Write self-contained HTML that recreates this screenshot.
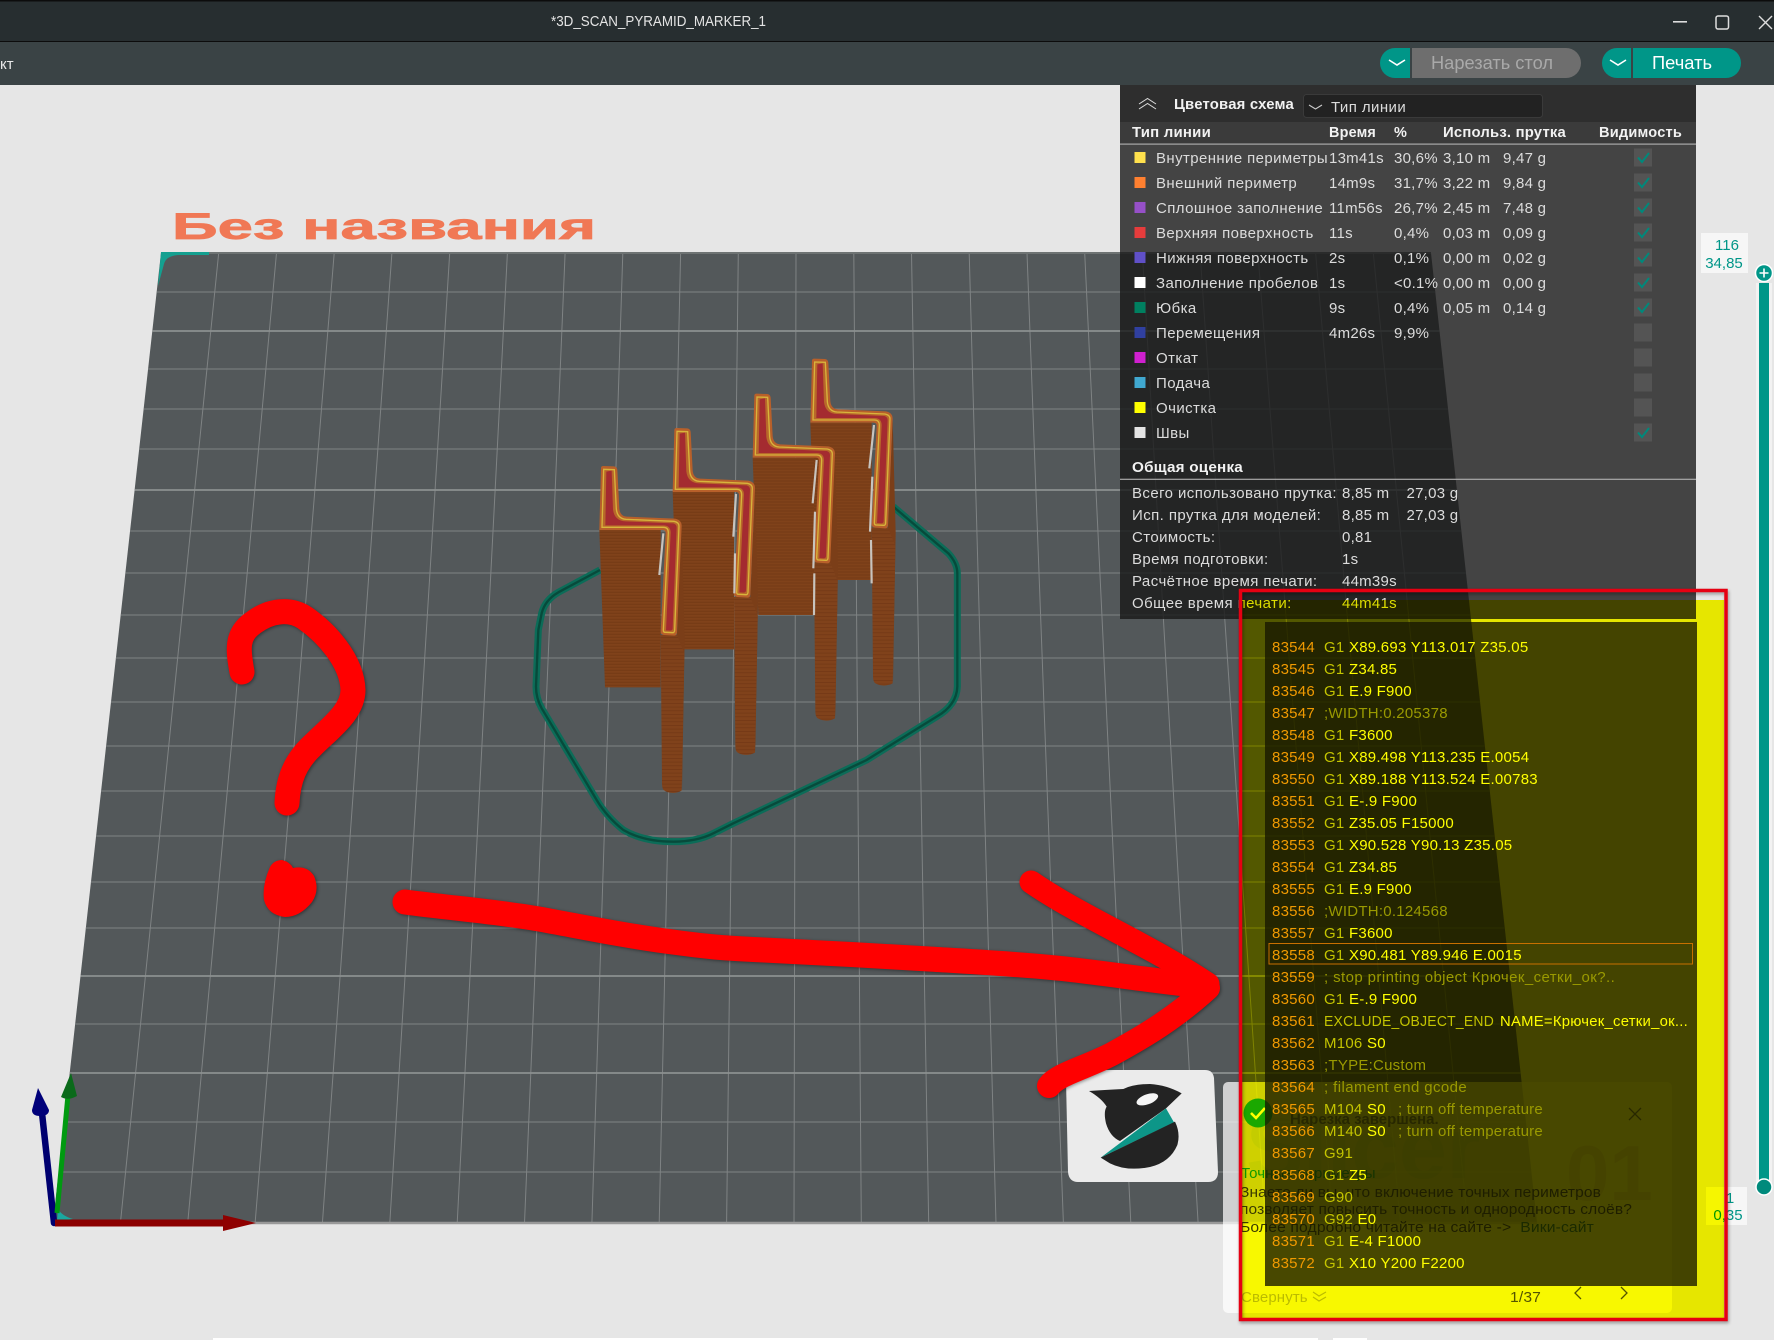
<!DOCTYPE html>
<html lang="ru"><head><meta charset="utf-8"><title>3D_SCAN_PYRAMID_MARKER_1</title>
<style>
html,body{margin:0;padding:0;background:#e6e6e6;width:1774px;height:1340px;overflow:hidden}
svg{display:block;position:absolute;left:0;top:0}
text{font-family:"Liberation Sans","Noto Sans CJK SC",sans-serif;white-space:pre}
.t{font-size:15px;fill:#dcdcdc;letter-spacing:.42px}
.n{font-size:15px;fill:#dcdcdc;letter-spacing:.25px}
.b{font-size:14.5px;font-weight:bold;fill:#f2f2f2;letter-spacing:.2px}
.c{font-size:15px;letter-spacing:.25px;fill:#fff}
.c .l{fill:#f09a40}
.d{fill:#c4c4c4}
.m{fill:#9a9a9a}
.nt{font-size:15px;fill:#3a3a3a;letter-spacing:.12px}
</style></head><body>
<svg width="1774" height="1340" viewBox="0 0 1774 1340" xmlns="http://www.w3.org/2000/svg">
<defs>
<clipPath id="bed"><path d="M161 253L1431 253L1537 1223L53 1223Z"/></clipPath>
<pattern id="st" width="8" height="9" patternUnits="userSpaceOnUse"><rect width="8" height="9" fill="#7d4019"/><rect y="0" width="8" height="2" fill="#743915"/><rect y="5" width="8" height="1" fill="#84461d"/></pattern>
<pattern id="lg" width="8" height="11" patternUnits="userSpaceOnUse"><rect width="8" height="11" fill="#80421b"/><rect y="0" width="8" height="2.500" fill="#743916"/></pattern>
<g id="model">
<path d="M545 560L554 900L546 1350L531 885Z" fill="#7b3e18"/>
<path d="M298 570L482 570L482 1042L315 1042Z" fill="url(#st)"/>
<path d="M482 885L531 885L553 940L545 1352Q520 1365 495 1353Q486 1350 486 1330Z" fill="url(#lg)"/>
<path d="M303 384Q303 378 310 378L342 379Q351 380 352 390L358 505Q360 528 380 530L525 536Q545 540 545 558L531 878Q530 887 522 887L492 885Q482 884 482 875L497 580Q497 570 488 570L298 570Z" fill="#b8602a"/>
<path d="M311 388L343 389L349 507Q352 536 378 538L522 544Q537 547 537 558L524 871Q523 879 517 878L495 877Q490 877 490 870L505 578Q505 562 490 562L306 562Z" fill="#b8682a" stroke="#d8b43c" stroke-width="4"/>
<path d="M319 395L335 392L339 508Q343 543 378 544L520 550Q530 553 530 562L518 866Q517 872 511 872L498 871L512 578Q512 556 490 556L316 556Z" fill="#a42b30"/>
</g>
</defs>

<!-- background -->
<rect width="1774" height="1340" fill="#e6e6e6"/>
<rect x="213" y="1338" width="1105" height="2" fill="#fff"/>
<rect x="1333" y="1338" width="34" height="2" fill="#fff"/>

<!-- title bar and toolbar -->
<rect width="1774" height="42" fill="#272e30"/>
<rect width="1774" height="1.500" fill="#0c0c0c"/>
<rect y="41" width="1774" height="1.500" fill="#0c0c0c"/>
<rect y="42" width="1774" height="43" fill="#3a4345"/>
<text x="551" y="26" font-size="14.500" fill="#e4e4e4" textLength="215" lengthAdjust="spacingAndGlyphs">*3D_SCAN_PYRAMID_MARKER_1</text>
<text x="0" y="69" font-size="15" fill="#e8e8e8">кт</text>
<rect x="1673" y="21" width="14" height="1.600" fill="#ddd"/>
<rect x="1716" y="16" width="12.500" height="13" rx="2" fill="none" stroke="#ddd" stroke-width="1.500"/>
<path d="M1759 16L1772 29M1772 16L1759 29" stroke="#ddd" stroke-width="1.400" fill="none"/>

<!-- buttons -->
<path d="M1395 48H1410V78H1395A15 15 0 0 1 1395 48Z" fill="#009688"/>
<path d="M1412 48H1566A15 15 0 0 1 1566 78H1412Z" fill="#6e6e6e"/>
<path d="M1389 60L1397 65L1405 60" fill="none" stroke="#fff" stroke-width="1.600"/>
<text x="1431" y="69" font-size="18" fill="#a9a9a9" textLength="122" lengthAdjust="spacingAndGlyphs">Нарезать стол</text>
<path d="M1617 48H1631V78H1617A15 15 0 0 1 1617 48Z" fill="#009688"/>
<path d="M1633 48H1726A15 15 0 0 1 1726 78H1633Z" fill="#009688"/>
<path d="M1610 60L1618 65L1626 60" fill="none" stroke="#fff" stroke-width="1.600"/>
<text x="1652" y="69" font-size="18" fill="#fff" textLength="60" lengthAdjust="spacingAndGlyphs">Печать</text>

<!-- name on bed -->
<text x="172" y="239" font-size="37" font-weight="bold" fill="#f07855" stroke="#f07855" stroke-width=".7" textLength="424" lengthAdjust="spacingAndGlyphs">Без названия</text>

<!-- bed -->
<path d="M161 253L1431 253L1537 1223L53 1223Z" fill="#53585a"/>
<g clip-path="url(#bed)">
<g stroke="#7f8384" stroke-width="1" fill="none">
<path d="M218.700 253L120.400 1223M276.500 253L187.700 1223M334.200 253L255.100 1223M391.900 253L322.400 1223M449.700 253L389.800 1223M507.400 253L457.200 1223M565.100 253L524.500 1223M622.800 253L591.900 1223M680.600 253L659.200 1223M738.300 253L726.600 1223M796 253L794 1223M853.800 253L861.300 1223M911.500 253L928.700 1223M969.200 253L996 1223M1027 253L1063.400 1223M1084.700 253L1130.800 1223M1142.400 253L1198.100 1223M1200.100 253L1265.500 1223M1257.900 253L1332.800 1223M1315.600 253L1400.200 1223M1373.300 253L1467.600 1223"/>
<path d="M0 292H1774M0 369H1774M0 409H1774M0 449H1774M0 531H1774M0 573H1774M0 615H1774M0 658H1774M0 702H1774M0 746H1774M0 791H1774M0 836H1774M0 882H1774M0 928H1774M0 1024H1774M0 1122H1774M0 1172H1774"/>
</g>
<path d="M0 331H1774M0 490H1774M0 976H1774M0 1073H1774" stroke="#8c9090" stroke-width="1.700" fill="none"/>
</g>
<path d="M161 253H1431" stroke="#6e7373" stroke-width="2"/>
<path d="M53 1223H1537" stroke="#999" stroke-width="2.500"/>
<path d="M161 252L209 252L209 255L178 255Q166 256 164 264L158 286Z" fill="#14a090"/>
<path d="M58 1209Q62 1216 73 1219L57 1221Z" fill="#1aa8a0"/>

<!-- skirt -->
<g transform="translate(500 340) scale(.33333)" fill="none" stroke-linejoin="round">
<path d="M300 690L175 757Q135 780 125 820L115 870L108 1040Q108 1075 125 1105L290 1380Q320 1430 370 1470Q430 1505 520 1505Q590 1505 640 1480L700 1450L1100 1260L1310 1130Q1370 1095 1372 1040L1372 700Q1372 670 1345 640L1180 500" stroke="#0c6c58" stroke-width="21"/>
<path d="M300 690L175 757Q135 780 125 820L115 870L108 1040Q108 1075 125 1105L290 1380Q320 1430 370 1470Q430 1505 520 1505Q590 1505 640 1480L700 1450L1100 1260L1310 1130Q1370 1095 1372 1040L1372 700Q1372 670 1345 640L1180 500" stroke="#074a3b" stroke-width="7"/>
</g>

<!-- models -->
<g transform="translate(500 340) scale(.33333)">
<use href="#model" transform="translate(633 -322)"/>
<use href="#model" transform="translate(460 -217)"/>
<use href="#model" transform="translate(220 -114)"/>
<use href="#model"/>
<g stroke="#c8c4be" stroke-width="6.500" fill="none">
<path d="M490 580L478 705"/>
<path d="M708 462L700 590M705 640L703 760"/>
<path d="M950 360L938 490M945 515L940 685M943 700L942 825"/>
<path d="M1122 255L1108 385M1117 410L1110 575M1113 600L1115 730"/>
</g>
</g>

<!-- axes -->
<path d="M54 1223L42 1113" stroke="#000070" stroke-width="6.500" stroke-linecap="round"/>
<path d="M38 1088L32 1110Q32 1116 40 1116Q49 1116 49 1110Z" fill="#00007a"/>
<path d="M57 1213L68 1095" stroke="#009a10" stroke-width="5"/>
<path d="M71 1073L61 1097Q68 1101 77 1096Z" fill="#0a6a1a"/>
<rect x="55" y="1219.500" width="168" height="7" fill="#8c0000"/>
<path d="M223 1215L256 1223L223 1231Z" fill="#8f0000"/>

<!-- logo tile -->
<path d="M1076 1070L1205 1070Q1213 1070 1214 1078L1218 1172Q1218 1182 1208 1182L1078 1182Q1069 1182 1068 1172L1066 1080Q1066 1070 1076 1070Z" fill="#ebebeb"/>
<g transform="translate(1060 1065) scale(.33333)">
<path d="M87 78Q130 75 190 72Q220 57 270 57Q320 60 365 85L318 130L180 228Q150 215 138 175Q130 140 140 125Q125 100 87 78Z" fill="#232323"/>
<path d="M318 130L342 172L122 278Z" fill="#0d9688"/>
<path d="M345 170Q362 205 352 240Q330 292 270 306Q200 320 150 295L122 278Z" fill="#232323"/>
<ellipse cx="262" cy="103" rx="34" ry="15" transform="rotate(-20 262 103)" fill="#f5f5f5"/>
</g>

<!-- notification -->
<rect x="1223" y="1082" width="449" height="231" rx="5" fill="#fff" fill-opacity=".72"/>
<text x="1246" y="1178" font-size="86" font-weight="bold" fill="#3aa070" fill-opacity=".07">Slicer</text>
<text x="1566" y="1200" font-size="78" font-weight="bold" fill="#a06000" fill-opacity=".14">01</text>
<circle cx="1258" cy="1113" r="14.500" fill="#1aa83c"/>
<path d="M1251 1113L1256 1118L1265 1108" fill="none" stroke="#fff" stroke-width="2.600"/>
<text x="1290" y="1124" font-size="15" font-weight="bold" fill="#606060">Нарезка завершена.</text>
<path d="M1629 1108L1641 1120M1641 1108L1629 1120" stroke="#666" stroke-width="1.300"/>
<text x="1241" y="1178" class="nt" style="fill:#119a6c">Точные периметры</text>
<text x="1240" y="1197" class="nt" textLength="361" lengthAdjust="spacingAndGlyphs">Знаете ли вы, что включение точных периметров</text>
<text x="1240" y="1214" class="nt" textLength="392" lengthAdjust="spacingAndGlyphs">позволяет повысить точность и однородность слоёв?</text>
<text x="1240" y="1232" class="nt" textLength="354" lengthAdjust="spacingAndGlyphs">Более подробно читайте на сайте -&gt;  <tspan fill="#2a7058">Вики-сайт</tspan></text>
<text x="1241" y="1302" class="nt" style="fill:#bbb">Свернуть</text>
<path d="M1313 1292L1319 1296L1326 1292M1313 1297L1319 1301L1326 1297" fill="none" stroke="#bbb" stroke-width="1.200"/>
<text x="1510" y="1302" class="nt" style="fill:#555" textLength="31" lengthAdjust="spacingAndGlyphs">1/37</text>
<path d="M1581 1287L1575 1293L1581 1299M1621 1287L1627 1293L1621 1299" fill="none" stroke="#555" stroke-width="1.300"/>

<!-- slider -->
<rect x="1756" y="283" width="16" height="904" fill="#f2f2f2"/>
<rect x="1759" y="283" width="10" height="900" fill="#009688"/>
<circle cx="1764" cy="273" r="8.500" fill="#009688" stroke="#fff" stroke-width="1.500"/>
<path d="M1759.500 273H1768.500M1764 268.500V277.500" stroke="#fff" stroke-width="1.600"/>
<circle cx="1764" cy="1187" r="8" fill="#008a7c" stroke="#fff" stroke-width="1.500"/>
<path d="M1701 233H1748V273H1701Z" fill="#f6f6f6"/>
<text x="1727" y="250" font-size="15" fill="#009688" text-anchor="middle">116</text>
<text x="1724" y="268" font-size="15" fill="#009688" text-anchor="middle">34,85</text>
<path d="M1706 1187H1747V1225H1706Z" fill="#f6f6f6"/>
<text x="1730" y="1203" font-size="15" fill="#009688" text-anchor="middle">1</text>
<text x="1728" y="1220" font-size="15" fill="#009688" text-anchor="middle">0,35</text>

<!-- legend panel -->
<rect x="1120" y="85" width="576" height="534" fill="#171717" fill-opacity=".784"/>
<rect x="1120" y="85" width="576" height="37" fill="#2e2e2e"/>
<rect x="1120" y="122" width="576" height="22" fill="#000" fill-opacity=".12"/>
<path d="M1139 104L1147.500 98.500L1156 104M1139 109L1147.500 103.500L1156 109" fill="none" stroke="#ddd" stroke-width="1"/>
<text x="1174" y="109" class="b" textLength="120" lengthAdjust="spacingAndGlyphs">Цветовая схема</text>
<rect x="1303.500" y="94.500" width="239" height="23" rx="3" fill="#222" stroke="#3a3a3a"/>
<path d="M1309 105L1315.500 109L1322 105" fill="none" stroke="#ccc" stroke-width="1.100"/>
<text x="1331" y="112" class="t">Тип линии</text>

<text x="1132" y="137" class="b" textLength="79" lengthAdjust="spacingAndGlyphs">Тип линии</text>
<text x="1329" y="137" class="b" textLength="47" lengthAdjust="spacingAndGlyphs">Время</text>
<text x="1394" y="137" class="b">%</text>
<text x="1443" y="137" class="b" textLength="123" lengthAdjust="spacingAndGlyphs">Использ. прутка</text>
<text x="1599" y="137" class="b" textLength="83" lengthAdjust="spacingAndGlyphs">Видимость</text>
<rect x="1120" y="143.500" width="576" height="1.200" fill="#aaa"/>

<g>
<rect x="1134.500" y="152" width="11" height="11" fill="#ffe14d"/>
<rect x="1134.500" y="177" width="11" height="11" fill="#ff8030"/>
<rect x="1134.500" y="202" width="11" height="11" fill="#9650c8"/>
<rect x="1134.500" y="227" width="11" height="11" fill="#e63c3c"/>
<rect x="1134.500" y="252" width="11" height="11" fill="#6050c8"/>
<rect x="1134.500" y="277" width="11" height="11" fill="#ffffff"/>
<rect x="1134.500" y="302" width="11" height="11" fill="#008060"/>
<rect x="1134.500" y="327" width="11" height="11" fill="#3040a0"/>
<rect x="1134.500" y="352" width="11" height="11" fill="#d020d0"/>
<rect x="1134.500" y="377" width="11" height="11" fill="#40a8d0"/>
<rect x="1134.500" y="402" width="11" height="11" fill="#ffff00"/>
<rect x="1134.500" y="427" width="11" height="11" fill="#e4e4e4"/>
</g>

<text x="1156" y="163" class="t" textLength="172" lengthAdjust="spacingAndGlyphs">Внутренние периметры</text>
<text x="1156" y="188" class="t">Внешний периметр</text>
<text x="1156" y="213" class="t">Сплошное заполнение</text>
<text x="1156" y="238" class="t">Верхняя поверхность</text>
<text x="1156" y="263" class="t">Нижняя поверхность</text>
<text x="1156" y="288" class="t">Заполнение пробелов</text>
<text x="1156" y="313" class="t">Юбка</text>
<text x="1156" y="338" class="t">Перемещения</text>
<text x="1156" y="363" class="t">Откат</text>
<text x="1156" y="388" class="t">Подача</text>
<text x="1156" y="413" class="t">Очистка</text>
<text x="1156" y="438" class="t">Швы</text>

<text class="n" x="1329" y="163">13m41s</text><text class="n" x="1394" y="163">30,6%</text><text class="n" x="1443" y="163">3,10 m</text><text class="n" x="1503" y="163">9,47 g</text>
<text class="n" x="1329" y="188">14m9s</text><text class="n" x="1394" y="188">31,7%</text><text class="n" x="1443" y="188">3,22 m</text><text class="n" x="1503" y="188">9,84 g</text>
<text class="n" x="1329" y="213">11m56s</text><text class="n" x="1394" y="213">26,7%</text><text class="n" x="1443" y="213">2,45 m</text><text class="n" x="1503" y="213">7,48 g</text>
<text class="n" x="1329" y="238">11s</text><text class="n" x="1394" y="238">0,4%</text><text class="n" x="1443" y="238">0,03 m</text><text class="n" x="1503" y="238">0,09 g</text>
<text class="n" x="1329" y="263">2s</text><text class="n" x="1394" y="263">0,1%</text><text class="n" x="1443" y="263">0,00 m</text><text class="n" x="1503" y="263">0,02 g</text>
<text class="n" x="1329" y="288">1s</text><text class="n" x="1394" y="288">&lt;0.1%</text><text class="n" x="1443" y="288">0,00 m</text><text class="n" x="1503" y="288">0,00 g</text>
<text class="n" x="1329" y="313">9s</text><text class="n" x="1394" y="313">0,4%</text><text class="n" x="1443" y="313">0,05 m</text><text class="n" x="1503" y="313">0,14 g</text>
<text class="n" x="1329" y="338">4m26s</text><text class="n" x="1394" y="338">9,9%</text>

<g fill="#545454">
<rect x="1634" y="148.500" width="18" height="18"/><rect x="1634" y="173.500" width="18" height="18"/><rect x="1634" y="198.500" width="18" height="18"/><rect x="1634" y="223.500" width="18" height="18"/><rect x="1634" y="248.500" width="18" height="18"/><rect x="1634" y="273.500" width="18" height="18"/><rect x="1634" y="298.500" width="18" height="18"/><rect x="1634" y="323.500" width="18" height="18"/><rect x="1634" y="348.500" width="18" height="18"/><rect x="1634" y="373.500" width="18" height="18"/><rect x="1634" y="398.500" width="18" height="18"/><rect x="1634" y="423.500" width="18" height="18"/>
</g>
<g fill="none" stroke="#00897b" stroke-width="2">
<path d="M1638 157.500L1642 162L1649 153"/><path d="M1638 182.500L1642 187L1649 178"/><path d="M1638 207.500L1642 212L1649 203"/><path d="M1638 232.500L1642 237L1649 228"/><path d="M1638 257.500L1642 262L1649 253"/><path d="M1638 282.500L1642 287L1649 278"/><path d="M1638 307.500L1642 312L1649 303"/><path d="M1638 432.500L1642 437L1649 428"/>
</g>

<text x="1132" y="472" class="b" textLength="111" lengthAdjust="spacingAndGlyphs">Общая оценка</text>
<rect x="1120" y="478.700" width="576" height="1.200" fill="#aaa"/>
<text class="t" x="1132" y="498" textLength="205" lengthAdjust="spacingAndGlyphs">Всего использовано прутка:</text><text class="n" x="1342" y="498">8,85 m</text><text class="n" x="1406.500" y="498">27,03 g</text>
<text class="t" x="1132" y="520">Исп. прутка для моделей:</text><text class="n" x="1342" y="520">8,85 m</text><text class="n" x="1406.500" y="520">27,03 g</text>
<text class="t" x="1132" y="542">Стоимость:</text><text class="n" x="1342" y="542">0,81</text>
<text class="t" x="1132" y="564">Время подготовки:</text><text class="n" x="1342" y="564">1s</text>
<text class="t" x="1132" y="586">Расчётное время печати:</text><text class="n" x="1342" y="586">44m39s</text>
<text class="t" x="1132" y="608">Общее время печати:</text><text class="n" x="1342" y="608">44m41s</text>

<!-- gcode panel -->
<rect x="1265" y="622" width="432" height="664" fill="#171717" fill-opacity=".784"/>
<rect x="1269" y="943.500" width="423.500" height="20.500" fill="none" stroke="#c87030" stroke-width="1"/>
<g class="c">
<text class="c" x="1272" y="652"><tspan class="l">83544</tspan><tspan x="1324" class="d">G1 </tspan>X89.693 Y113.017 Z35.05</text>
<text class="c" x="1272" y="674"><tspan class="l">83545</tspan><tspan x="1324" class="d">G1 </tspan>Z34.85</text>
<text class="c" x="1272" y="696"><tspan class="l">83546</tspan><tspan x="1324" class="d">G1 </tspan>E.9 F900</text>
<text class="c" x="1272" y="718"><tspan class="l">83547</tspan><tspan x="1324" class="m">;WIDTH:0.205378</tspan></text>
<text class="c" x="1272" y="740"><tspan class="l">83548</tspan><tspan x="1324" class="d">G1 </tspan>F3600</text>
<text class="c" x="1272" y="762"><tspan class="l">83549</tspan><tspan x="1324" class="d">G1 </tspan>X89.498 Y113.235 E.0054</text>
<text class="c" x="1272" y="784"><tspan class="l">83550</tspan><tspan x="1324" class="d">G1 </tspan>X89.188 Y113.524 E.00783</text>
<text class="c" x="1272" y="806"><tspan class="l">83551</tspan><tspan x="1324" class="d">G1 </tspan>E-.9 F900</text>
<text class="c" x="1272" y="828"><tspan class="l">83552</tspan><tspan x="1324" class="d">G1 </tspan>Z35.05 F15000</text>
<text class="c" x="1272" y="850"><tspan class="l">83553</tspan><tspan x="1324" class="d">G1 </tspan>X90.528 Y90.13 Z35.05</text>
<text class="c" x="1272" y="872"><tspan class="l">83554</tspan><tspan x="1324" class="d">G1 </tspan>Z34.85</text>
<text class="c" x="1272" y="894"><tspan class="l">83555</tspan><tspan x="1324" class="d">G1 </tspan>E.9 F900</text>
<text class="c" x="1272" y="916"><tspan class="l">83556</tspan><tspan x="1324" class="m">;WIDTH:0.124568</tspan></text>
<text class="c" x="1272" y="938"><tspan class="l">83557</tspan><tspan x="1324" class="d">G1 </tspan>F3600</text>
<text class="c" x="1272" y="960"><tspan class="l">83558</tspan><tspan x="1324" class="d">G1 </tspan>X90.481 Y89.946 E.0015</text>
<text class="c" x="1272" y="982"><tspan class="l">83559</tspan></text><text class="c m" x="1324" y="982" textLength="291" lengthAdjust="spacing">; stop printing object Крючек_сетки_ок?..</text>
<text class="c" x="1272" y="1004"><tspan class="l">83560</tspan><tspan x="1324" class="d">G1 </tspan>E-.9 F900</text>
<text class="c" x="1272" y="1026"><tspan class="l">83561</tspan></text><text class="c d" x="1324" y="1026" textLength="170" lengthAdjust="spacingAndGlyphs">EXCLUDE_OBJECT_END</text><text class="c" x="1500" y="1026" textLength="188" lengthAdjust="spacingAndGlyphs">NAME=Крючек_сетки_ок...</text>
<text class="c" x="1272" y="1048"><tspan class="l">83562</tspan><tspan x="1324" class="d">M106 </tspan>S0</text>
<text class="c" x="1272" y="1070"><tspan class="l">83563</tspan><tspan x="1324" class="m">;TYPE:Custom</tspan></text>
<text class="c" x="1272" y="1092"><tspan class="l">83564</tspan></text><text class="c m" x="1324" y="1092" textLength="143" lengthAdjust="spacing">; filament end gcode</text>
<text class="c" x="1272" y="1114"><tspan class="l">83565</tspan><tspan x="1324" class="d">M104 </tspan>S0</text><text class="c m" x="1398" y="1114" textLength="145" lengthAdjust="spacing">; turn off temperature</text>
<text class="c" x="1272" y="1136"><tspan class="l">83566</tspan><tspan x="1324" class="d">M140 </tspan>S0</text><text class="c m" x="1398" y="1136" textLength="145" lengthAdjust="spacing">; turn off temperature</text>
<text class="c" x="1272" y="1158"><tspan class="l">83567</tspan><tspan x="1324" class="d">G91</tspan></text>
<text class="c" x="1272" y="1180"><tspan class="l">83568</tspan><tspan x="1324" class="d">G1 </tspan>Z5</text>
<text class="c" x="1272" y="1202"><tspan class="l">83569</tspan><tspan x="1324" class="d">G90</tspan></text>
<text class="c" x="1272" y="1224"><tspan class="l">83570</tspan><tspan x="1324" class="d">G92 </tspan>E0</text>
<text class="c" x="1272" y="1246"><tspan class="l">83571</tspan><tspan x="1324" class="d">G1 </tspan>E-4 F1000</text>
<text class="c" x="1272" y="1268"><tspan class="l">83572</tspan><tspan x="1324" class="d">G1 </tspan>X10 Y200 F2200</text>
</g>

<!-- yellow highlighter -->
<rect x="1240" y="600" width="484" height="719" fill="#ffff00" style="mix-blend-mode:multiply"/>

<!-- red rectangle -->
<rect x="1240.500" y="590.500" width="485.500" height="729" fill="none" stroke="#e60012" stroke-width="3.500" style="filter:drop-shadow(1px 2px 1.500px rgba(0,0,0,.35))"/>

<!-- red hand drawing -->
<g fill="none" stroke="#ff0000" stroke-linecap="round" stroke-linejoin="round" style="filter:drop-shadow(1.500px 1.500px 1.500px rgba(0,0,0,.4))">
<path d="M242 672C238 650 236 635 253 623C270 610 290 608 305 618C325 632 352 660 353 690C353 712 330 728 312 746C295 762 288 780 287 803" stroke-width="25"/>
<path d="M282 860Q290 862 293 868Q307 865 314 876Q320 890 312 902Q300 917 285 917Q268 915 264 900Q262 885 270 867Q274 860 282 860Z" fill="#ff0000" stroke="none"/>
<path d="M405 902C450 908 500 912 539 919S620 935 665 941S720 948 764 950S880 956 929 959S1020 964 1066 969S1160 982 1205 986" stroke-width="25"/>
<path d="M1031 882C1080 916 1150 945 1208 984" stroke-width="23"/>
<path d="M1208 988C1175 1018 1145 1036 1112 1054C1085 1068 1058 1074 1049 1086" stroke-width="24"/>
</g>
</svg>
</body></html>
